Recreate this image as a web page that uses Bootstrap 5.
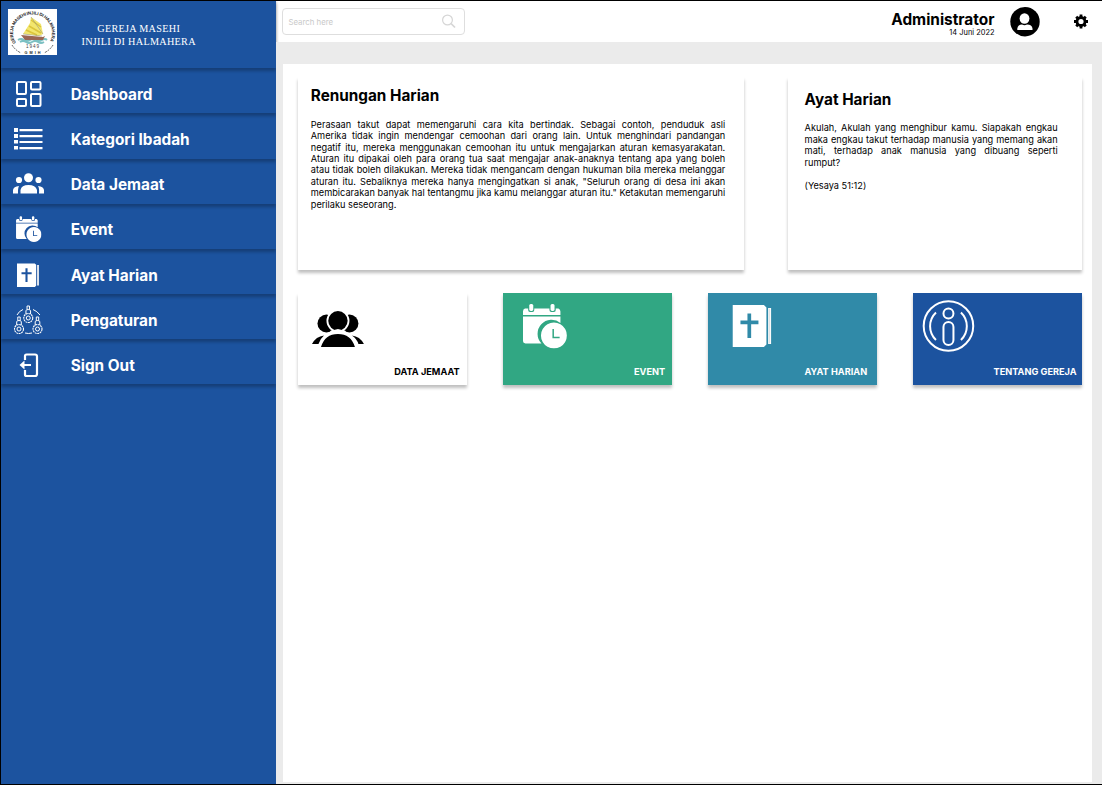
<!DOCTYPE html>
<html lang="id">
<head>
<meta charset="utf-8">
<meta name="viewport" content="width=device-width, initial-scale=1">
<title>GMIH Dashboard</title>
<link href="https://cdn.jsdelivr.net/npm/bootstrap@5.3.0/dist/css/bootstrap.min.css" rel="stylesheet">
<style>
body{font-family:Inter,"Liberation Sans",sans-serif;color:#000;background:#fff}
.frame{height:785px;border:1px solid #000;border-right:0}
.side{width:274.6px;background:#1c539f;box-shadow:0 0 3px rgba(0,0,0,.3);color:#fff}
.brand{height:67.3px;box-shadow:0 3px 3px rgba(0,0,0,.25);padding:8px 7px}
.brand-name{font:10.2px/12.5px "Liberation Serif",serif;letter-spacing:.3px;margin-left:24.5px;padding-top:14px}
.item{height:45.15px;box-shadow:0 3px 3px rgba(0,0,0,.25);color:#fff;font-size:15.35px;font-weight:700;padding:7.2px 0 0 12px}
.item:hover{color:#fff}
.item svg{width:31px;height:31px;margin-right:26.7px;flex:none}
.top{height:41px;padding:0 13.5px 0 6.4px}
.search{width:183px;height:27px;border:1px solid #dedede;border-radius:4px;padding:0 8px 0 5.500px}
.search input{font-size:7.800px;width:120px;line-height:12px}
.search input::placeholder{color:#c9c9c9;opacity:1}
.admin{font-size:15.4px;line-height:16px;font-weight:700}
.date{font-size:7.45px;line-height:9px}
.user{padding-top:6px}
.avatar{margin:0 17px 0 15px}
.stage{background:#ebebeb;padding:22px 10.5px 2px 7.4px}
.panel{background:#fff;padding:13px 9.8px 0 14.8px}
.box{background:#fff;height:193px;box-shadow:0 3px 3px rgba(0,0,0,.25)}
.box h2{font-size:15.3px;line-height:19px;font-weight:700;margin:0}
.box p{font-size:9.2px;line-height:11.45px;text-align:justify;margin:13.8px 0 0}
.renungan{width:446.5px;padding:8.8px 19px 0 13px}
.ayat{width:293.6px;padding:12.5px 24px 0 16.5px}
.tiles{margin-top:23px}
.tile{width:168.8px;height:92px;box-shadow:0 3px 3px rgba(0,0,0,.25);font-size:9.2px;line-height:12px;font-weight:700;color:#fff}
.tile svg{width:168.8px;height:73px}
.green{background:#31a783}.teal{background:#308aa8}.blue{background:#1c539f}
</style>
</head>
<body>
<svg width="0" height="0" class="position-absolute">
<defs>
<symbol id="cal" viewBox="0 0 44 45">
<path fill="currentColor" d="M2 5H5.200V6.500Q5.200 8.500 7 8.500H9.500Q11.300 8.500 11.300 6.500V5H26.500V6.500Q26.500 8.500 28.500 8.500H31Q32.800 8.500 32.800 6.500V5H35.500Q37.500 6 37.500 8V11.500H0V8Q0 5.500 2 5Z"/>
<rect x="6.300" y="0.500" width="4" height="7" rx="1.500" fill="currentColor"/><rect x="27.600" y="0.500" width="4" height="7" rx="1.500" fill="currentColor"/>
<path fill="currentColor" d="M0 13H37.500V19.500A14 14 0 0 0 18.500 40H2.500Q0 40 0 37.500Z"/>
<path fill="currentColor" fill-rule="evenodd" d="M31 19A13 13 0 1 1 30.990 19ZM29.500 25.500V34.700H36.700V33.200H31V25.500Z"/>
</symbol>
<symbol id="bible" viewBox="0 0 39 43">
<path fill="currentColor" fill-rule="evenodd" d="M0 0.500H31.500L34 3V40L31.500 42.500H0ZM15 9V16H8V19.700H15V33.500H18.700V19.700H26V16H18.700V9Z"/>
<path fill="currentColor" d="M35.700 3.500H38.800V39.500H35.700Z"/><path stroke="#888" stroke-opacity=".45" stroke-width=".6" d="M37.200 4V39"/>
</symbol>
<symbol id="knob" viewBox="0 0 11 19">
<g fill="none" stroke="currentColor" stroke-width="1"><circle cx="5.500" cy="13" r="4.500" stroke-width="1.100" stroke-dasharray="2 .6"/><circle cx="5.500" cy="13" r="2"/><path d="M3.200 9V5.800Q3.200 4.500 5.500 4.500T7.800 5.800V9M4.300 4.500V1H6.700V4.500"/></g>
</symbol>
</defs></svg>

<div class="frame d-flex">
<aside class="side flex-shrink-0">
  <div class="brand d-flex align-items-start">
    <svg width="49" height="46" viewBox="0 0 49 46" class="flex-shrink-0">
      <rect width="49" height="46" fill="#fff"/>
      <path id="ring" d="M8.500 34.500A19.500 18.500 0 1 1 40.500 34.500" fill="none"/>
      <path d="M4 36Q7 41 13 44M45 36Q42 41 36 44" fill="none" stroke="#333" stroke-width=".8" stroke-dasharray="2 1"/>
      <text font-family="Liberation Sans" font-weight="700" font-size="4.400" fill="#171717"><textPath href="#ring" startOffset="1" textLength="78">GEREJA MASEHI INJILI DI HALMAHERA</textPath></text>
      <path d="M10 31q3-2 6 0t6 0 6 0 6 0 5 0M12 33q3-2 6 0t6 0 6 0 6 0" fill="none" stroke="#7cc0c2" stroke-width="1.800"/>
      <path d="M13 26L35 28 37 27 35 31H17Z" fill="#9a6653"/>
      <path d="M23 8L33 15 35 25 31 27 15 25 22 14Z" fill="#f2e66d"/>
      <path d="M21 17L33 24M18 21L29 26M23 11L33 18" stroke="#dbc43b" stroke-width="1.500"/>
      <path d="M23 8L35 25M15 25L34 27" fill="none" stroke="#888" stroke-width=".5"/>
      <text x="25" y="38.500" text-anchor="middle" font-family="Liberation Sans" font-size="4.600" letter-spacing=".9" fill="#444">1949</text>
      <text x="25.500" y="45" text-anchor="middle" font-family="Liberation Sans" font-weight="700" font-size="3.800" letter-spacing="2" fill="#222">GMIH</text>
    </svg>
    <div class="brand-name text-center">GEREJA MASEHI<br>INJILI DI HALMAHERA</div>
  </div>
  <nav>
    <a href="#" class="item d-flex align-items-center text-decoration-none"><svg viewBox="0 0 31 31" fill="none" stroke="currentColor" stroke-width="2"><rect x="4" y="3" width="9" height="12" rx="1"/><rect x="18" y="3" width="9.500" height="7.500" rx="1"/><rect x="4" y="20" width="9" height="7" rx="1"/><rect x="18" y="15" width="9.500" height="12" rx="1"/></svg>Dashboard</a>
    <a href="#" class="item d-flex align-items-center text-decoration-none"><svg viewBox="0 0 31 31" fill="currentColor"><path d="M1 4h4v4H1zM1 10h4v4H1zM1 16h4v3.500H1zM1 22h4v3.500H1zM6.500 5h23v2.300h-23zM6.500 11h23v2.300h-23zM6.500 17h23v2h-23zM6.500 23h23v2.300h-23z"/></svg>Kategori Ibadah</a>
    <a href="#" class="item d-flex align-items-center text-decoration-none"><svg viewBox="0 0 31 31" fill="currentColor"><circle cx="15.500" cy="8.700" r="4.500"/><circle cx="6" cy="11" r="3.100"/><circle cx="25.500" cy="11" r="3.100"/><path d="M7.500 24.500V21Q8.500 16 15.500 16T24 21V24.500ZM0 24.500V21Q.5 17.500 6 17Q4.800 19 5 24.500ZM31 24.500V21Q30.500 17.500 25 17Q26.500 19 26 24.500Z"/></svg>Data Jemaat</a>
    <a href="#" class="item d-flex align-items-center text-decoration-none"><svg viewBox="0 0 31 31"><use href="#cal" x="3" y="2" width="25.500" height="26"/></svg>Event</a>
    <a href="#" class="item d-flex align-items-center text-decoration-none"><svg viewBox="0 0 31 31"><use href="#bible" x="4" y="3" width="22" height="24.500"/></svg>Ayat Harian</a>
    <a href="#" class="item d-flex align-items-center text-decoration-none"><svg viewBox="0 0 31 31"><use href="#knob" x="9.500" y="0" width="11.500" height="19"/><use href="#knob" x="0.500" y="11" width="11" height="19"/><use href="#knob" x="19" y="11" width="11" height="19"/><path d="M4 10Q6 6 10 4.500M20 4.500Q24 6 27 10M12 28Q15.500 29 19 28" fill="none" stroke="currentColor"/></svg>Pengaturan</a>
    <a href="#" class="item d-flex align-items-center text-decoration-none"><svg viewBox="0 0 31 31" fill="none" stroke="currentColor" stroke-width="2.200"><path d="M12 10V6Q12 4.500 13.500 4.500H22Q24 4.500 24 6.500V24Q24 26 22 26H13.500Q12 26 12 24.500V20M18 15H9"/><path d="M6.500 15L11.500 10.500V19.500Z" fill="currentColor" stroke="none"/></svg>Sign Out</a>
  </nav>
</aside>
<main class="flex-grow-1 d-flex flex-column">
  <header class="top d-flex align-items-center">
    <div class="search d-flex align-items-center justify-content-between">
      <input class="border-0 p-0 bg-transparent" placeholder="Search here">
      <svg width="15" height="15" viewBox="0 0 15 15" fill="none" stroke="#d6d6d6" stroke-width="1.200"><circle cx="6.500" cy="6" r="4.900"/><path d="M10 9.500L14 13.500" stroke-width="1.700"/></svg>
    </div>
    <div class="user ms-auto text-end"><div class="admin">Administrator</div><div class="date">14 Juni 2022</div></div>
    <svg class="avatar" width="30" height="30" viewBox="0 0 30 30"><circle cx="15" cy="14.700" r="14.700"/><ellipse cx="14.500" cy="11.500" rx="4.900" ry="5.300" fill="#fff"/><path d="M7.300 23V21.500Q8 17.500 12 17.500Q14.500 18.800 17 17.500Q22 17.500 22.500 21.500V23Z" fill="#fff"/></svg>
    <svg class="ms-3" width="16" height="16" viewBox="0 0 16 16"><circle cx="8" cy="7.500" r="4" fill="none" stroke="#000" stroke-width="2.800"/><g stroke="#000" stroke-width="2.800"><path d="M8 .5V3.500M8 11.500V14.500M1 7.500H4M12 7.500H15M3.200 2.700L5 4.500M11 10.500L12.800 12.300M3.200 12.300L5 10.500M11 4.500L12.800 2.700"/></g></svg>
  </header>
  <section class="stage flex-grow-1">
    <div class="panel h-100">
      <div class="d-flex justify-content-between">
        <article class="box renungan">
          <h2>Renungan Harian</h2>
          <p>Perasaan takut dapat memengaruhi cara kita bertindak. Sebagai contoh, penduduk asli Amerika&nbsp;tidak ingin mendengar cemoohan dari orang lain. Untuk menghindari pandangan negatif itu, mereka menggunakan cemoohan itu untuk mengajarkan aturan kemasyarakatan. Aturan itu dipakai oleh para orang tua saat mengajar anak-anaknya tentang apa yang boleh atau&nbsp;tidak boleh dilakukan. Mereka tidak mengancam dengan hukuman bila mereka melanggar aturan&nbsp;itu. Sebaliknya mereka hanya mengingatkan si anak, "Seluruh orang di desa ini akan membicarakan banyak hal tentangmu jika kamu melanggar aturan itu." Ketakutan memengaruhi perilaku&nbsp;seseorang.</p>
        </article>
        <article class="box ayat">
          <h2>Ayat Harian</h2>
          <p>Akulah, Akulah yang menghibur kamu. Siapakah engkau maka engkau takut terhadap manusia yang memang akan mati, terhadap anak manusia yang dibuang seperti rumput?<br><br>(Yesaya 51:12)</p>
        </article>
      </div>
      <div class="tiles d-flex justify-content-between">
        <div class="tile bg-white text-black text-end"><svg viewBox="0 0 169 73" class="d-block"><ellipse cx="28.500" cy="30.500" rx="9" ry="9"/><ellipse cx="51.500" cy="30.500" rx="9" ry="9"/><circle cx="40" cy="27.800" r="10.600" stroke="#fff" stroke-width="1.800"/><path d="M32 38L40 36L48 38L46 41H34Z" fill="#fff"/><path d="M14 51Q18 43.500 26 42.500Q22 46 20.500 51ZM66 51Q62 43.500 54 42.500Q59 46 60.500 51ZM23 54Q27 41 40 41T57 54Z"/></svg><div style="padding-right:7px">DATA JEMAAT</div></div>
        <div class="tile green text-end"><svg viewBox="0 0 169 73" class="d-block"><use href="#cal" x="20" y="10.500" width="44" height="45"/></svg><div style="padding-right:6.500px">EVENT</div></div>
        <div class="tile teal text-end"><svg viewBox="0 0 169 73" class="d-block"><use href="#bible" x="24.500" y="11.500" width="39" height="43"/></svg><div style="padding-right:9.500px">AYAT HARIAN</div></div>
        <div class="tile blue text-end"><svg viewBox="0 0 169 73" class="d-block" fill="none" stroke="#fff" stroke-width="2"><circle cx="35.500" cy="33" r="24.800"/><circle cx="35.500" cy="20.500" r="5"/><rect x="30.500" y="29" width="10" height="23" rx="5"/><path d="M23 19.500A19 19 0 0 0 23 47M48 19.500A19 19 0 0 1 48 47"/></svg><div style="padding-right:5px">TENTANG GEREJA</div></div>
      </div>
    </div>
  </section>
</main>
</div>
<script src="https://cdn.jsdelivr.net/npm/bootstrap@5.3.0/dist/js/bootstrap.bundle.min.js"></script>
</body>
</html>
